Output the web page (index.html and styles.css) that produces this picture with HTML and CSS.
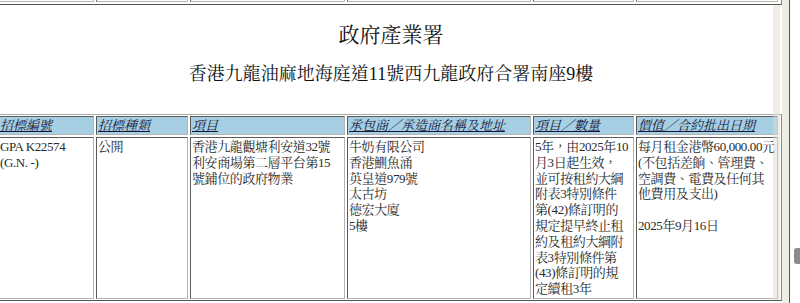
FILE: index.html
```html
<!DOCTYPE html>
<html lang="zh-Hant">
<head>
<meta charset="utf-8">
<title>政府產業署</title>
<link rel="stylesheet" href="styles.css">
</head>
<body>
<div class="window">
  <main class="page">
    <div class="prev">
      <div class="prev-cell"></div>
      <div class="prev-cell"></div>
      <div class="prev-cell"></div>
      <div class="prev-cell"></div>
      <div class="prev-cell"></div>
      <div class="prev-cell"></div>
    </div>
    <header class="heading">
      <h2 class="title">政府產業署</h2>
      <h3 class="address">香港九龍油麻地海庭道11號西九龍政府合署南座9樓</h3>
    </header>
    <div class="tender">
      <div class="th"><a>招標編號</a></div>
      <div class="th"><a>招標種類</a></div>
      <div class="th"><a>項目</a></div>
      <div class="th"><a>承包商／承造商名稱及地址</a></div>
      <div class="th"><a>項目／數量</a></div>
      <div class="th"><a>價值／合約批出日期</a></div>

      <div class="td">GPA K22574 (G.N. -)</div>
      <div class="td">公開</div>
      <div class="td nw">香港九龍觀塘利安道32號<br>利安商場第二層平台第15<br>號鋪位的政府物業</div>
      <div class="td nw">牛奶有限公司<br>香港鰂魚涌<br>英皇道979號<br>太古坊<br>德宏大廈<br>5樓</div>
      <div class="td nw">5年，由2025年10<br>月3日起生效，<br>並可按租約大綱<br>附表3特別條件<br>第(42)條訂明的<br>規定提早終止租<br>約及租約大綱附<br>表3特別條件第<br>(43)條訂明的規<br>定續租3年</div>
      <div class="td nw">每月租金港幣60,000.00元<br>(不包括差餉、管理費、<br>空調費、電費及任何其<br>他費用及支出)<br><br>2025年9月16日</div>
    </div>
    <div class="edge-strip"></div>
  </main>
  <div class="frame-edge"></div>
  <div class="scrollbar"><div class="thumb"></div></div>
</div>
</body>
</html>
```

FILE: styles.css
```css
* { box-sizing: border-box; }
html, body { margin: 0; padding: 0; }
body {
  background: #ffffff;
  font-family: "Liberation Serif", "Noto Serif CJK TC", "Noto Sans CJK TC", serif;
  color: #222222;
  overflow: hidden;
}
.window {
  display: flex;
  width: 800px;
  height: 303px;
  overflow: hidden;
}
.page {
  position: relative;
  width: 782px;
  flex: none;
  overflow: hidden;
  background: #ffffff;
}
.edge-strip {
  position: absolute;
  left: 773px;
  top: 5px;
  width: 7px;
  height: 295px;
  background: rgba(223, 219, 205, 0.5);
}
.frame-edge {
  width: 8px;
  flex: none;
  background: #efede6;
  border-right: 1px solid #555555;
}
.scrollbar {
  width: 10px;
  flex: none;
  background: #ffffff;
  padding-top: 248px;
  padding-left: 4px;
}
.thumb {
  width: 6px;
  height: 16px;
  background: #8b8b8b;
  border-radius: 3px 0 0 3px;
}

/* bottom of the previous table */
.prev {
  display: grid;
  grid-template-columns: 96px 92px 155px 184px 101px 142px;
  column-gap: 2px;
  margin-left: -4px;
  width: 786px;
  height: 5px;
  padding: 0 2px 2px 2px;
  border-bottom: 1px solid #555555;
  border-right: 1px solid #8a8a8a;
}
.prev-cell {
  border-left: 1px solid #666666;
  border-right: 1px solid #b5b5b5;
  border-bottom: 1px solid #b5b5b5;
}

.heading {
  text-align: center;
  color: #111111;
  padding-top: 18px;
}
.title {
  margin: 0;
  font-size: 21px;
  font-weight: normal;
  line-height: 24px;
}
.address {
  margin: 17px 0 0 0;
  font-size: 18px;
  font-weight: normal;
  line-height: 21px;
}

.tender {
  display: grid;
  grid-template-columns: 96px 92px 155px 184px 101px 142px;
  gap: 2px;
  margin: 29px 0 0 -4px;
  width: 786px;
  padding: 1px;
  border-top: 1px solid #a8a8a8;
  border-left: 1px solid #a8a8a8;
  border-right: 1px solid #8a8a8a;
  border-bottom: 1px solid #555555;
  font-size: 13px;
}
.th, .td {
  border-top: 1px solid #5a5a5a;
  border-left: 1px solid #5a5a5a;
  border-right: 1px solid #b5b5b5;
  border-bottom: 1px solid #b5b5b5;
  padding: 1px;
}
.th {
  background: #a6cfe3;
  line-height: 15px;
  white-space: nowrap;
  overflow: hidden;
}
.th a {
  color: #16163a;
  font-style: italic;
  text-decoration: underline;
}
.td {
  line-height: 15.8px;
  color: #2a2a2a;
  letter-spacing: -0.4px;
}
.nw { white-space: nowrap; }
```
